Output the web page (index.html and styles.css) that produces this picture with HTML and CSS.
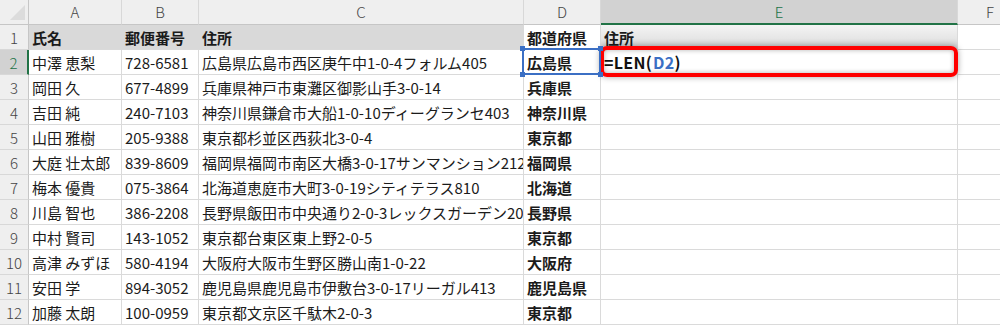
FILE: index.html
```html
<!DOCTYPE html>
<html lang="ja">
<head>
<meta charset="utf-8">
<link rel="stylesheet" href="styles.css">
</head>
<body>
<div class="sheet">
  <div class="corner"><span class="tri"></span></div>
  <div class="ch">A</div><div class="ch">B</div><div class="ch">C</div><div class="ch">D</div><div class="ch ch-sel">E</div><div class="ch ch-last">F</div>

  <div class="rh">1</div>
  <div class="c hd fill">氏名</div><div class="c hd fill">郵便番号</div><div class="c hd fill">住所</div><div class="c hd">都道府県</div><div class="c hd e1">住所</div><div class="c f"></div>

  <div class="rh rh-sel">2</div>
  <div class="c">中澤 恵梨</div><div class="c">728-6581</div><div class="c">広島県広島市西区庚午中1-0-4フォルム405</div><div class="c b ref">広島県<span class="hnd h1"></span><span class="hnd h2"></span><span class="hnd h3"></span><span class="hnd h4"></span></div><div class="c edit">=LEN(<span class="rf">D2</span>)</div><div class="c f"></div>

  <div class="rh">3</div>
  <div class="c">岡田 久</div><div class="c">677-4899</div><div class="c">兵庫県神戸市東灘区御影山手3-0-14</div><div class="c b">兵庫県</div><div class="c"></div><div class="c f"></div>

  <div class="rh">4</div>
  <div class="c">吉田 純</div><div class="c">240-7103</div><div class="c">神奈川県鎌倉市大船1-0-10ディーグランセ403</div><div class="c b">神奈川県</div><div class="c"></div><div class="c f"></div>

  <div class="rh">5</div>
  <div class="c">山田 雅樹</div><div class="c">205-9388</div><div class="c">東京都杉並区西荻北3-0-4</div><div class="c b">東京都</div><div class="c"></div><div class="c f"></div>

  <div class="rh">6</div>
  <div class="c">大庭 壮太郎</div><div class="c">839-8609</div><div class="c">福岡県福岡市南区大橋3-0-17サンマンション212</div><div class="c b">福岡県</div><div class="c"></div><div class="c f"></div>

  <div class="rh">7</div>
  <div class="c">梅本 優貴</div><div class="c">075-3864</div><div class="c">北海道恵庭市大町3-0-19シティテラス810</div><div class="c b">北海道</div><div class="c"></div><div class="c f"></div>

  <div class="rh">8</div>
  <div class="c">川島 智也</div><div class="c">386-2208</div><div class="c">長野県飯田市中央通り2-0-3レックスガーデン201</div><div class="c b">長野県</div><div class="c"></div><div class="c f"></div>

  <div class="rh">9</div>
  <div class="c">中村 賢司</div><div class="c">143-1052</div><div class="c">東京都台東区東上野2-0-5</div><div class="c b">東京都</div><div class="c"></div><div class="c f"></div>

  <div class="rh">10</div>
  <div class="c">高津 みずほ</div><div class="c">580-4194</div><div class="c">大阪府大阪市生野区勝山南1-0-22</div><div class="c b">大阪府</div><div class="c"></div><div class="c f"></div>

  <div class="rh">11</div>
  <div class="c">安田 学</div><div class="c">894-3052</div><div class="c">鹿児島県鹿児島市伊敷台3-0-17リーガル413</div><div class="c b">鹿児島県</div><div class="c"></div><div class="c f"></div>

  <div class="rh">12</div>
  <div class="c">加藤 太朗</div><div class="c">100-0959</div><div class="c">東京都文京区千駄木2-0-3</div><div class="c b">東京都</div><div class="c"></div><div class="c f"></div>

  <div class="callout"></div>
</div>
</body>
</html>
```

FILE: styles.css
```css
html, body {
  margin: 0;
  padding: 0;
  background: #ffffff;
}

.sheet {
  position: relative;
  display: grid;
  grid-template-columns: 29px 93px 77px 325px 77px 357px 42px;
  grid-template-rows: 25px repeat(12, 25px);
  width: 1000px;
  height: 325px;
  overflow: hidden;
  font-family: "Noto Sans CJK JP", "Noto Sans", sans-serif;
  font-size: 15px;
  color: #1b1b1b;
}

.corner {
  position: relative;
  background: #efefef;
  border-right: 1px solid #c6c6c6;
  border-bottom: 1px solid #c6c6c6;
}

.tri {
  position: absolute;
  right: 3px;
  bottom: 4px;
  width: 0;
  height: 0;
  border-left: 15px solid transparent;
  border-bottom: 15px solid #dcdcdc;
}

.ch {
  background: #efefef;
  border-right: 1px solid #d8d8d8;
  border-bottom: 1px solid #c6c6c6;
  color: #444;
  display: flex;
  align-items: center;
  justify-content: center;
  font-size: 15px;
  font-weight: 300;
  line-height: 1;
  padding-bottom: 1px;
}

.ch-sel {
  background: #d2d2d2;
  color: #217346;
  border-bottom: 2px solid #217346;
  padding-bottom: 0;
}

.ch-last {
  border-right: none;
  justify-content: flex-start;
  padding-left: 28px;
}

.rh {
  background: #efefef;
  border-right: 1px solid #c6c6c6;
  border-bottom: 1px solid #d8d8d8;
  color: #444;
  display: flex;
  align-items: center;
  justify-content: center;
  font-weight: 300;
  line-height: 1;
}

.rh-sel {
  background: #d2d2d2;
  color: #217346;
  border-right: 2px solid #217346;
}

.c {
  position: relative;
  border-right: 1px solid #dadada;
  border-bottom: 1px solid #dadada;
  padding: 0 0 0 3px;
  white-space: nowrap;
  overflow: hidden;
  display: flex;
  align-items: center;
  line-height: 1;
}

.c.f {
  border-right: none;
}

.hd {
  font-weight: 700;
}

.fill {
  background: #d9d9d9;
  border-right-color: #d9d9d9;
}

.e1 {
  background: linear-gradient(to bottom, #f4f4f4 0%, #e6e6e6 55%, #cfcfcf 100%);
}

.b {
  font-weight: 700;
}

.ref {
  overflow: visible;
  z-index: 2;
}

.ref::before {
  content: "";
  position: absolute;
  left: -2px;
  top: -2px;
  right: -1px;
  bottom: -1px;
  border: 2px solid #3b6fc4;
  pointer-events: none;
}

.hnd {
  position: absolute;
  width: 5px;
  height: 5px;
  background: #3b6fc4;
}

.h1 { left: -4px; top: -4px; }
.h2 { right: -3px; top: -4px; }
.h3 { left: -4px; bottom: -3px; }
.h4 { right: -3px; bottom: -3px; }

.edit {
  font-size: 16px;
  font-weight: 700;
  color: #111;
  letter-spacing: 0.3px;
}

.rf {
  color: #3b6fc4;
  margin-left: 1px;
}

.callout {
  position: absolute;
  left: 600px;
  top: 46px;
  width: 358px;
  height: 31px;
  box-sizing: border-box;
  border: 4px solid #ff0000;
  border-radius: 7px;
  box-shadow: 0 0 6px rgba(0, 0, 0, 0.35), inset 0 0 5px rgba(0, 0, 0, 0.3);
  pointer-events: none;
}
```
